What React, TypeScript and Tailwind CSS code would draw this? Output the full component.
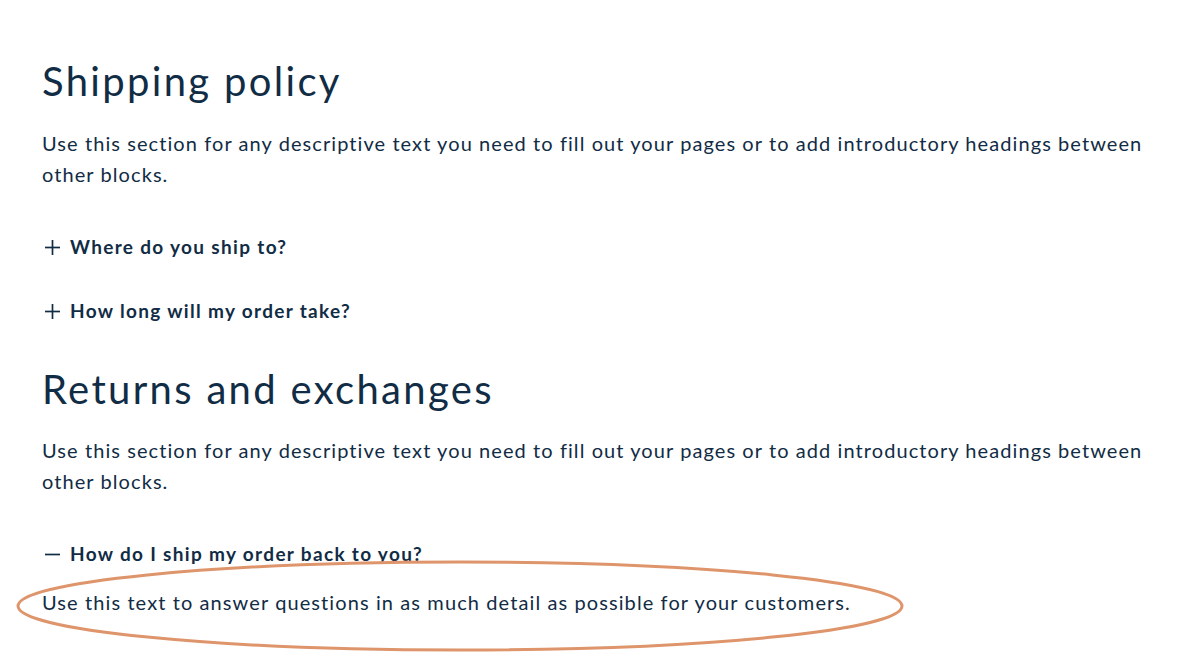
const body =
  "Use this section for any descriptive text you need to fill out your pages or to add introductory headings between other blocks.";

function Question({ text, open }: { text: string; open?: boolean }) {
  return (
    <div className="flex items-center h-[28px]">
      <span className="w-[28px] flex items-center">
        <svg width="17" height="17" viewBox="0 0 17 17" className="ml-[2px]">
          <line x1="1" y1="8.5" x2="16" y2="8.5" stroke="currentColor" strokeWidth="1.7" />
          {!open && <line x1="8.5" y1="1" x2="8.5" y2="16" stroke="currentColor" strokeWidth="1.7" />}
        </svg>
      </span>
      <span className="text-[19px] font-bold tracking-[0.07em]">{text}</span>
    </div>
  );
}

export default function App() {
  return (
    <div
      className="relative w-[1200px] h-[660px] overflow-hidden bg-white text-[#112c45]"
      style={{ fontFamily: "Lato, 'Open Sans', sans-serif" }}
    >
      <div className="pl-[42px] pr-[30px] pt-[57px]">
        <h2 className="text-[40px] leading-[48px] tracking-[0.058em] font-normal">Shipping policy</h2>
        <p className="mt-[23px] text-[20px] leading-[31px] tracking-[0.054em]">{body}</p>
        <div className="mt-[43px]">
          <Question text="Where do you ship to?" />
        </div>
        <div className="mt-[36px]">
          <Question text="How long will my order take?" />
        </div>
        <h2 className="mt-[40px] text-[40px] leading-[48px] tracking-[0.058em] font-normal">Returns and exchanges</h2>
        <p className="mt-[22px] text-[20px] leading-[31px] tracking-[0.054em]">{body}</p>
        <div className="mt-[43px]">
          <Question text="How do I ship my order back to you?" open />
        </div>
        <p className="mt-[19px] text-[20px] leading-[31px] tracking-[0.055em]">
          Use this text to answer questions in as much detail as possible for your customers.
        </p>
      </div>

      <svg className="absolute left-0 top-0 pointer-events-none" width="1200" height="660">
        <ellipse cx="460" cy="606" rx="442" ry="44" fill="none" stroke="#df956b" strokeWidth="3" />
      </svg>
    </div>
  );
}
